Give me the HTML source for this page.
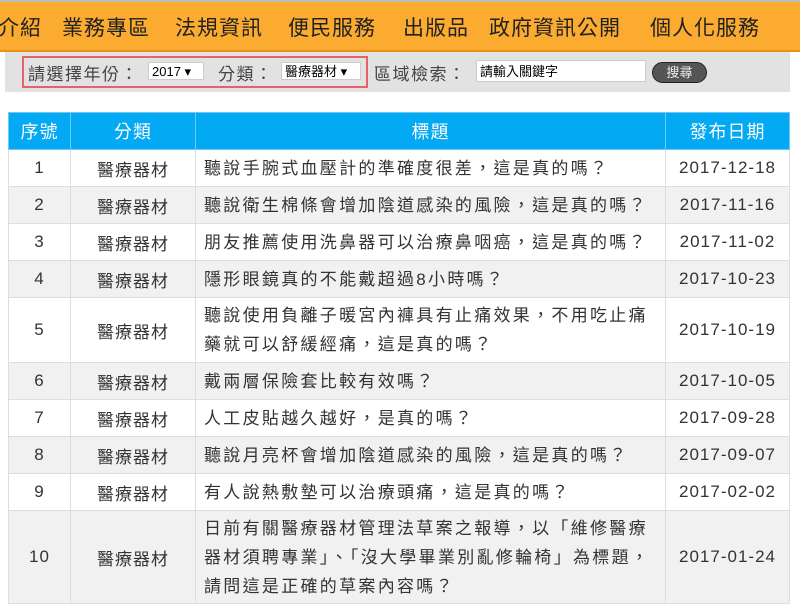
<!DOCTYPE html>
<html><head><meta charset="utf-8"><style>
body{margin:0;width:800px;height:605px;overflow:hidden;background:#fff;font-family:"Liberation Sans","Noto Sans CJK TC",sans-serif;color:#333}
.top{position:absolute;left:0;top:0;width:800px;height:2px;background:#bbb}
.nav{position:absolute;left:0;top:2px;width:800px;height:48px;background:#fbab2f;border-bottom:2px solid #e8921a}
.nav span{position:absolute;top:10px;font-size:21px;color:#222;letter-spacing:1px}
.panel{position:absolute;left:5px;top:52px;width:785px;height:40px;background:#e2e2e2}
.red{position:absolute;left:22px;top:56px;width:346px;height:32px;border:2px solid #e8606a;box-sizing:border-box}
.lab{position:absolute;top:60px;font-size:17px;color:#444;letter-spacing:1.5px}
.sel{position:absolute;top:62px;height:18px;background:#fff;border:1px solid #ccc;font-size:13px;color:#000;line-height:18px;padding-left:3px;box-sizing:border-box}
.btn{position:absolute;left:652px;top:62px;width:55px;height:21px;border-radius:11px;background:#555;border:1px solid #222;color:#eee;font-size:13px;text-align:center;line-height:20px;box-sizing:border-box}
table{position:absolute;left:8px;top:112px;border-collapse:collapse;width:782px;font-size:17px}
th{background:#03a9f2;color:#fff;font-weight:normal;height:36px;padding:0;border:1px solid #6fc9f5;font-size:18px;letter-spacing:1px}
td{border:1px solid #ddd;height:36px;text-align:center;padding:0;letter-spacing:1px}
td.t{text-align:left;padding:0 6px 0 8px;line-height:29px;letter-spacing:2.3px}
tr:nth-child(odd) td{background:#f1f1f1}
</style></head><body>
<div class="top"></div>
<div class="nav">
<span style="left:-2px">介紹</span><span style="left:62px">業務專區</span><span style="left:175px">法規資訊</span><span style="left:288px">便民服務</span><span style="left:403px">出版品</span><span style="left:489px">政府資訊公開</span><span style="left:650px">個人化服務</span>
</div>
<div class="panel"></div>
<div class="red"></div>
<div class="lab" style="left:28px">請選擇年份：</div>
<div class="sel" style="left:148px;width:56px">2017 ▾</div>
<div class="lab" style="left:218px">分類：</div>
<div class="sel" style="left:281px;width:80px">醫療器材 ▾</div>
<div class="lab" style="left:374px">區域檢索：</div>
<div class="sel" style="left:476px;width:170px;height:22px;top:60px;line-height:22px">請輸入關鍵字</div>
<div class="btn">搜尋</div>
<table>
<tr><th style="width:61px">序號</th><th style="width:124px">分類</th><th>標題</th><th style="width:123px">發布日期</th></tr>
<tr><td>1</td><td>醫療器材</td><td class="t">聽說手腕式血壓計的準確度很差，這是真的嗎？</td><td>2017-12-18</td></tr>
<tr><td>2</td><td>醫療器材</td><td class="t">聽說衛生棉條會增加陰道感染的風險，這是真的嗎？</td><td>2017-11-16</td></tr>
<tr><td>3</td><td>醫療器材</td><td class="t">朋友推薦使用洗鼻器可以治療鼻咽癌，這是真的嗎？</td><td>2017-11-02</td></tr>
<tr><td>4</td><td>醫療器材</td><td class="t">隱形眼鏡真的不能戴超過8小時嗎？</td><td>2017-10-23</td></tr>
<tr><td style="height:64px">5</td><td>醫療器材</td><td class="t">聽說使用負離子暖宮內褲具有止痛效果，不用吃止痛藥就可以舒緩經痛，這是真的嗎？</td><td>2017-10-19</td></tr>
<tr><td>6</td><td>醫療器材</td><td class="t">戴兩層保險套比較有效嗎？</td><td>2017-10-05</td></tr>
<tr><td>7</td><td>醫療器材</td><td class="t">人工皮貼越久越好，是真的嗎？</td><td>2017-09-28</td></tr>
<tr><td>8</td><td>醫療器材</td><td class="t">聽說月亮杯會增加陰道感染的風險，這是真的嗎？</td><td>2017-09-07</td></tr>
<tr><td>9</td><td>醫療器材</td><td class="t">有人說熱敷墊可以治療頭痛，這是真的嗎？</td><td>2017-02-02</td></tr>
<tr><td style="height:92px">10</td><td>醫療器材</td><td class="t">日前有關醫療器材管理法草案之報導，以「維修醫療器材須聘專業」、「沒大學畢業別亂修輪椅」為標題，請問這是正確的草案內容嗎？</td><td>2017-01-24</td></tr>
</table>
</body></html>
